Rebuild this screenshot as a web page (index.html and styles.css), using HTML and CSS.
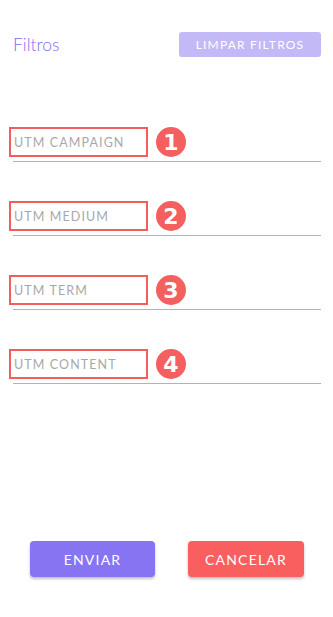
FILE: index.html
```html
<!DOCTYPE html>
<html lang="pt">
<head>
<meta charset="utf-8">
<link rel="stylesheet" href="styles.css">
</head>
<body>
<div class="page">
  <header class="top">
    <span class="title">Filtros</span>
    <button class="btn-clear">LIMPAR FILTROS</button>
  </header>
  <div class="fields">
    <div class="field">
      <div class="row"><span class="label">UTM CAMPAIGN</span><span class="badge">1</span></div>
      <div class="line"></div>
    </div>
    <div class="field">
      <div class="row"><span class="label">UTM MEDIUM</span><span class="badge">2</span></div>
      <div class="line"></div>
    </div>
    <div class="field">
      <div class="row"><span class="label">UTM TERM</span><span class="badge">3</span></div>
      <div class="line"></div>
    </div>
    <div class="field">
      <div class="row"><span class="label">UTM CONTENT</span><span class="badge">4</span></div>
      <div class="line"></div>
    </div>
  </div>
  <div class="actions">
    <button class="btn btn-send">ENVIAR</button>
    <button class="btn btn-cancel">CANCELAR</button>
  </div>
</div>
</body>
</html>
```
FILE: styles.css
```css
html, body {
  margin: 0;
  padding: 0;
  background: #ffffff;
}
.page {
  width: 333px;
  height: 617px;
  font-family: "Open Sans", "Noto Sans", sans-serif;
  display: flex;
  flex-direction: column;
}
.top {
  display: flex;
  justify-content: space-between;
  align-items: center;
  padding: 32px 12px 0 13px;
  height: 25px;
}
.title {
  font-family: Lato, sans-serif;
  font-size: 17.5px;
  color: #8070ee;
  font-weight: 300;
}
.btn-clear {
  width: 142px;
  height: 25px;
  border: none;
  border-radius: 3px;
  background: #c3b9f7;
  color: #ffffff;
  font-family: Lato, sans-serif;
  font-size: 12px;
  letter-spacing: 1.2px;
  padding: 0;
}
.fields {
  display: flex;
  flex-direction: column;
  gap: 39px;
  padding: 70px 12px 0 9px;
}
.field {
  display: flex;
  flex-direction: column;
}
.row {
  display: flex;
  align-items: center;
  height: 30px;
  gap: 8px;
}
.label {
  box-sizing: border-box;
  width: 139px;
  height: 30px;
  border: 2px solid #f45d5d;
  padding: 1px 0 0 3px;
  display: flex;
  align-items: center;
  font-family: Lato, sans-serif;
  font-size: 12.5px;
  letter-spacing: 1.1px;
  color: #a8a8ab;
}
.badge {
  width: 30px;
  height: 30px;
  border-radius: 50%;
  background: #f45f60;
  color: #fff;
  font-family: "DejaVu Sans", sans-serif;
  font-weight: bold;
  font-size: 22px;
  display: flex;
  align-items: center;
  justify-content: center;
}
.line {
  margin: 4px 0 0 4px;
  height: 1px;
  background: #b3b3b6;
}
.actions {
  margin-top: auto;
  margin-bottom: 40px;
  display: flex;
  justify-content: space-between;
  padding: 0 29px 0 30px;
}
.btn {
  height: 36px;
  border: none;
  border-radius: 4px;
  color: #fff;
  font-family: Lato, sans-serif;
  font-size: 14px;
  letter-spacing: 1.2px;
  box-shadow: 0 2px 3px rgba(0,0,0,0.25);
  padding: 0;
}
.btn-send {
  width: 125px;
  background: #8674f2;
}
.btn-cancel {
  width: 116px;
  background: #f95f5f;
}
```
